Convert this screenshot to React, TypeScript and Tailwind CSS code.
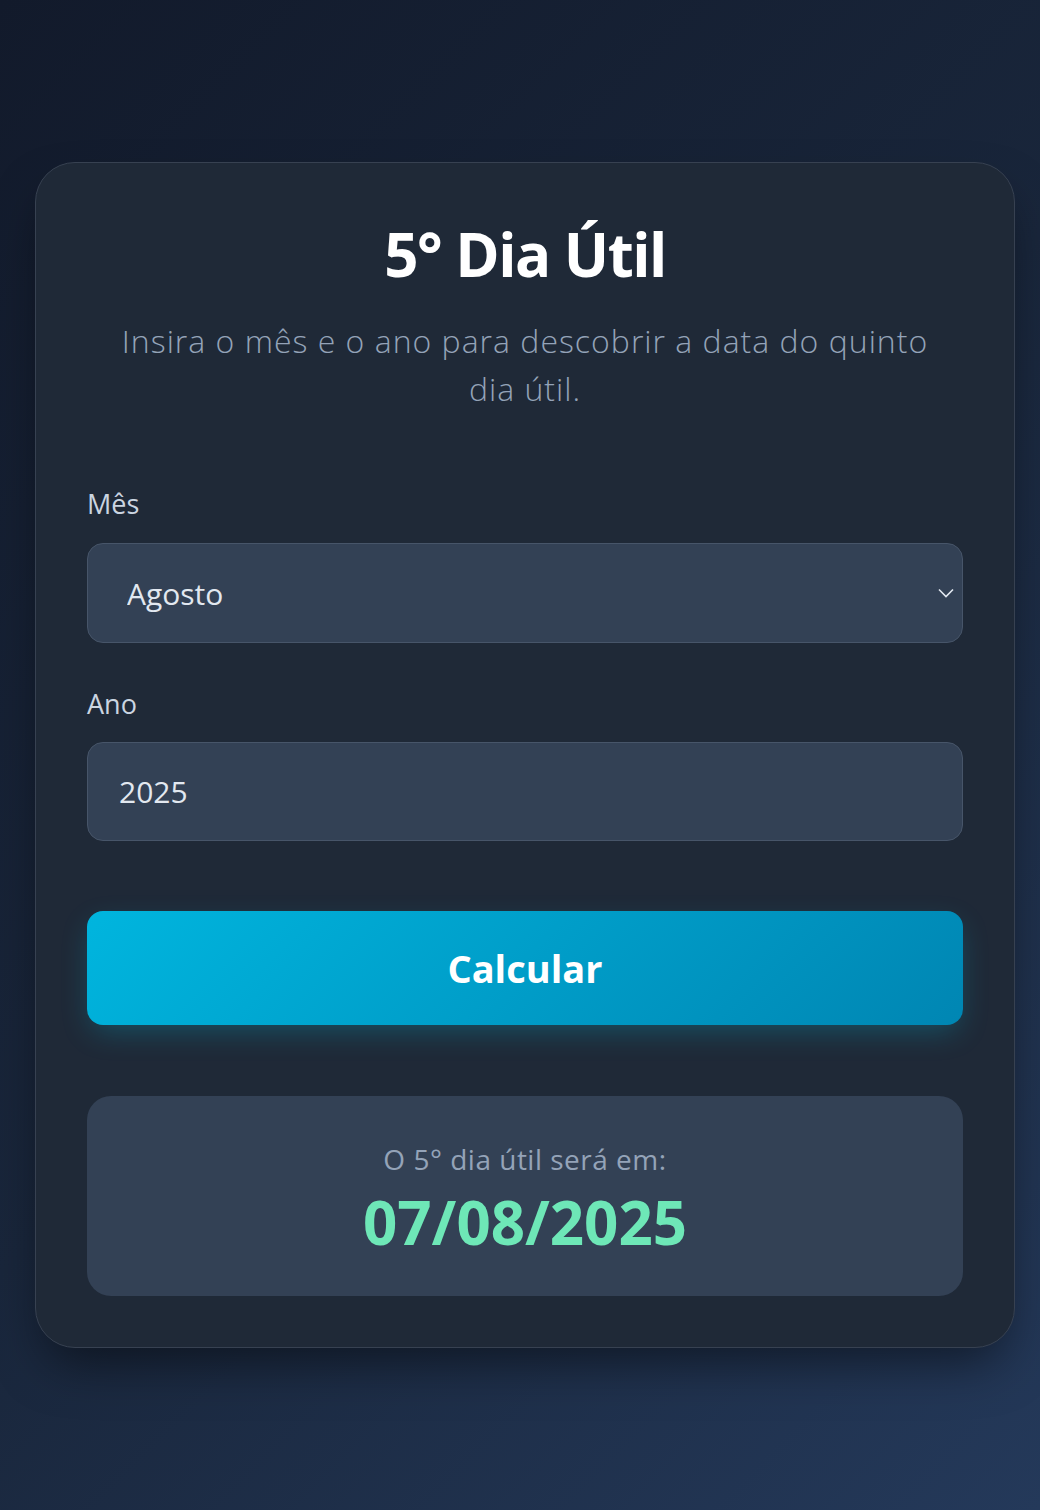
import { useState } from 'react';

// meses do ano
const MESES = [
  'Janeiro',
  'Fevereiro',
  'Março',
  'Abril',
  'Maio',
  'Junho',
  'Julho',
  'Agosto',
  'Setembro',
  'Outubro',
  'Novembro',
  'Dezembro',
];

function quintoDiaUtil(mes: number, ano: number) {
  let count = 0;
  const d = new Date(ano, mes, 1);
  while (true) {
    const dow = d.getDay();
    if (dow !== 0 && dow !== 6) {
      count++;
      if (count === 5) break;
    }
    d.setDate(d.getDate() + 1);
  }
  const dd = String(d.getDate()).padStart(2, '0');
  const mm = String(d.getMonth() + 1).padStart(2, '0');
  return `${dd}/${mm}/${d.getFullYear()}`;
}

export default function App() {
  const [mes, setMes] = useState(7);
  const [ano, setAno] = useState('2025');
  const [resultado, setResultado] = useState<string | null>(quintoDiaUtil(7, 2025));

  const calcular = () => {
    const a = parseInt(ano, 10);
    if (!isNaN(a)) setResultado(quintoDiaUtil(mes, a));
  };

  return (
    <div className="min-h-screen flex items-center pl-[35px] bg-[linear-gradient(135deg,#121a2b_0%,#19263b_50%,#24395a_100%)] font-['Open_Sans','Noto_Sans',sans-serif]">
      <div className="w-[980px] bg-[#1f2937] border border-[#374151] rounded-[40px] p-[51px] shadow-[0_25px_50px_-12px_rgba(0,0,0,0.5)]">
        <h1 className="text-center text-white font-bold text-[60px] leading-[80px] tracking-tight">
          5° Dia Útil
        </h1>
        <p className="mt-[23px] text-center text-[#94a3b8] text-[32px] leading-[48px] font-light tracking-[1px] px-[16px]">
          Insira o mês e o ano para descobrir a data do quinto dia útil.
        </p>

        <div className="mt-[73px]">
          <label className="block text-[#cbd5e1] text-[27px] leading-[36px] font-medium">Mês</label>
          <div className="relative mt-[21px]">
            <select
              value={mes}
              onChange={(e) => setMes(Number(e.target.value))}
              className="appearance-none w-full h-[100px] bg-[#334155] border border-[#475569] rounded-[16px] pl-[39px] pr-[50px] text-[30px] text-[#e2e8f0] outline-none"
            >
              {MESES.map((m, i) => (
                <option key={m} value={i}>
                  {m}
                </option>
              ))}
            </select>
            <svg
              className="absolute right-[9px] top-1/2 -translate-y-1/2 w-[16px] h-[10px] pointer-events-none"
              viewBox="0 0 16 10"
              fill="none"
              stroke="#e2e8f0"
              strokeWidth="1.6"
            >
              <path d="M1 1.5l7 7 7-7" />
            </svg>
          </div>

          <label className="block mt-[43px] text-[#cbd5e1] text-[27px] leading-[36px] font-medium">Ano</label>
          <input
            type="text"
            value={ano}
            onChange={(e) => setAno(e.target.value)}
            className="mt-[20px] w-full h-[99px] bg-[#334155] border border-[#475569] rounded-[16px] px-[31px] text-[30px] text-[#e2e8f0] outline-none"
          />
        </div>

        <button
          onClick={calcular}
          className="mt-[70px] w-full h-[114px] rounded-[16px] bg-[linear-gradient(135deg,#00b5de,#0086b3)] text-white font-bold text-[38px] shadow-[0_10px_30px_-5px_rgba(6,182,212,0.3)]"
        >
          Calcular
        </button>

        {resultado && (
          <div className="mt-[71px] h-[200px] bg-[#334155] rounded-[24px] flex flex-col items-center justify-center gap-[11px]">
            <p className="text-[#94a3b8] text-[28px] leading-[40px] tracking-[0.5px]">O 5° dia útil será em:</p>
            <p className="text-[#6ee7b7] font-bold text-[60px] leading-[64px]">{resultado}</p>
          </div>
        )}
      </div>
    </div>
  );
}
